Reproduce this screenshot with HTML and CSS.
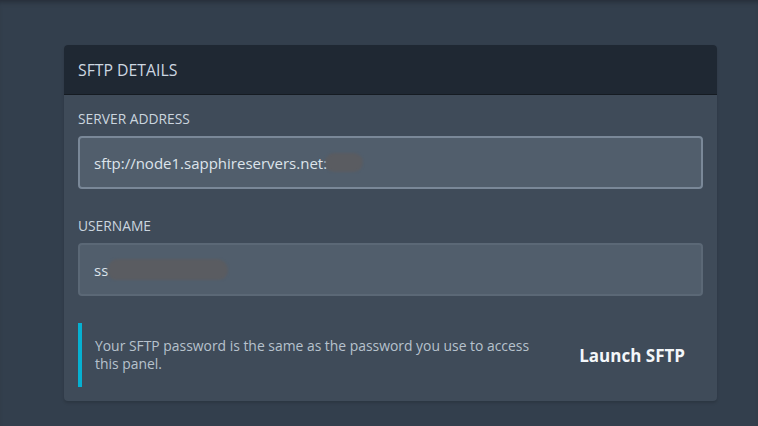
FILE: index.html
```html
<!DOCTYPE html>
<html lang="en">
<head>
    <meta charset="UTF-8">
    <meta name="viewport" content="width=device-width, initial-scale=1.0">
    <title>SFTP Details</title>
    <link rel="stylesheet" href="styles.css">
</head>
<body>
    <div class="card">
        <div class="card-header">SFTP DETAILS</div>
        <div class="card-body">
            <div class="field">
                <label class="field-label">SERVER ADDRESS</label>
                <div class="field-input focused">sftp://node1.sapphireservers.net:<span class="redact redact-port"></span></div>
            </div>
            <div class="field">
                <label class="field-label">USERNAME</label>
                <div class="field-input">ss<span class="redact redact-user"></span></div>
            </div>
            <div class="footer-row">
                <p class="note">Your SFTP password is the same as the password you use to access this panel.</p>
                <button class="launch-btn">Launch SFTP</button>
            </div>
        </div>
    </div>
</body>
</html>
```

FILE: styles.css
```css
body { margin: 0; font-family: "Open Sans", "Liberation Sans", sans-serif; background: #333f4d; height: 426px; box-shadow: inset 0 5px 5px -3px #262d38; overflow: hidden; }
.card { margin: 45px 41px 0 64px; background: #3f4b59; border-radius: 4px; box-shadow: 0 2px 3px rgba(0, 0, 0, 0.15); }
.card-header { height: 49px; padding: 0 14px; display: flex; align-items: center; background: #1f2833; color: #cdd7e1; font-size: 15.8px; border-bottom: 1px solid #151b22; border-radius: 4px 4px 0 0; }
.card-body { padding: 14px 14px 14px 14px; }
.field { margin-bottom: 27px; }
.field-label { display: block; font-size: 13.8px; line-height: 20px; color: #cbd5df; margin-bottom: 7px; }
.field-input { box-sizing: border-box; height: 53px; padding: 0 14px; display: flex; align-items: center; background: #515e6c; border: 2px solid #5b6876; border-radius: 4px; color: #dde4eb; font-size: 15px; }
.field-input.focused { border-color: #7a8898; }
.redact { display: inline-block; background: #5a5c61; border-radius: 10px; filter: blur(1px); }
.redact-port { width: 38px; height: 19px; margin-left: -2px; }
.redact-user { width: 120px; height: 21px; border-radius: 10px 12px 10px 8px; }
.footer-row { display: flex; align-items: center; margin-top: 2px; }
.note { flex: 1; margin: 0; padding: 14px 24px 14px 13px; border-left: 4px solid #06b0d1; font-size: 13.9px; line-height: 18px; color: #b7c2cd; }
.launch-btn { background: transparent; border: none; padding: 10px 18px; font-family: inherit; font-size: 17px; font-weight: 700; color: #f3f6f9; cursor: pointer; }
```
